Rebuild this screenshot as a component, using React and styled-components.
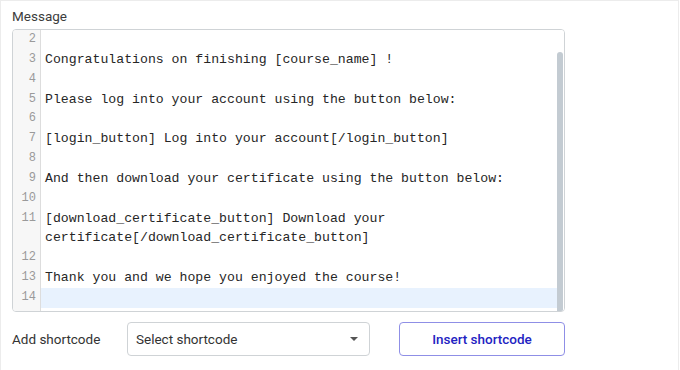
import React from "react";
import styled, { createGlobalStyle } from "styled-components";

const Global = createGlobalStyle`
  html, body { margin: 0; padding: 0; background: #fff; }
  body { font-family: Roboto, "Noto Sans", Arial, sans-serif; }
`;

const Card = styled.div`
  box-sizing: border-box;
  width: 679px;
  height: 370px;
  border: 1px solid #ececec;
  border-bottom: none;
  padding: 7px 0 0 11px;
  background: #fff;
`;

const Label = styled.div`
  font-size: 13.5px;
  line-height: 16px;
  color: #3c3c3c;
  margin-bottom: 5px;
`;

const Editor = styled.div`
  box-sizing: border-box;
  width: 553px;
  height: 283px;
  border: 1px solid #cfd3d6;
  border-radius: 4px;
  display: flex;
  overflow: hidden;
  background: #fff;
`;

const Body = styled.div`
  flex: 1;
  display: grid;
  grid-template-columns: 27px 1fr;
  align-content: start;
  background: linear-gradient(to right, #f7f7f7 0, #f7f7f7 27px, #fff 27px);
  position: relative;
  &::before {
    content: "";
    position: absolute;
    left: 27px;
    top: 0;
    bottom: 0;
    border-left: 1px solid #dddddd;
  }
`;

const Num = styled.div`
  font-family: "Liberation Mono", "DejaVu Sans Mono", monospace;
  font-size: 12px;
  line-height: 19.85px;
  color: #9a9a9a;
  text-align: right;
  padding-right: 4px;
`;

const Code = styled.div`
  font-family: "Liberation Mono", "Courier New", monospace;
  font-size: 13.2px;
  line-height: 19.85px;
  color: #262626;
  white-space: pre-wrap;
  word-break: normal;
  padding-left: 5px;
  padding-right: 4px;
  min-height: 19.85px;
  background: ${(p) => (p.$active ? "#e8f2fe" : "transparent")};
  margin-left: ${(p) => (p.$active ? "1px" : "0")};
`;

const Track = styled.div`
  width: 7px;
  display: flex;
  flex-direction: column;
  padding-top: 22px;
  background: #fff;
`;

const Thumb = styled.div`
  flex: 1;
  width: 6px;
  background: #c3cbd2;
  border-radius: 3px 3px 0 0;
`;

const Row = styled.div`
  display: flex;
  align-items: center;
  gap: 29px;
  margin-top: 10px;
`;

const RowLabel = styled.div`
  width: 86px;
  font-size: 13.5px;
  color: #333;
  white-space: nowrap;
`;

const Select = styled.div`
  box-sizing: border-box;
  width: 243px;
  height: 34px;
  border: 1px solid #cfd3d6;
  border-radius: 4px;
  display: flex;
  align-items: center;
  justify-content: space-between;
  padding: 0 11px 0 8px;
  font-size: 13.5px;
  color: #333;
`;

const Caret = styled.span`
  width: 0;
  height: 0;
  border-left: 4px solid transparent;
  border-right: 4px solid transparent;
  border-top: 4px solid #555;
`;

const Button = styled.button`
  box-sizing: border-box;
  width: 166px;
  height: 34px;
  border: 1px solid #8f8fe6;
  border-radius: 4px;
  background: #fff;
  color: #2323c2;
  font-family: Roboto, "Noto Sans", Arial, sans-serif;
  font-size: 13.5px;
  font-weight: 500;
  cursor: pointer;
`;

const lines = [
  [2, ""],
  [3, "Congratulations on finishing [course_name] !"],
  [4, ""],
  [5, "Please log into your account using the button below:"],
  [6, ""],
  [7, "[login_button] Log into your account[/login_button]"],
  [8, ""],
  [9, "And then download your certificate using the button below:"],
  [10, ""],
  [11, "[download_certificate_button] Download your certificate[/download_certificate_button]"],
  [12, ""],
  [13, "Thank you and we hope you enjoyed the course!"],
  [14, ""],
];

export default function App() {
  return (
    <>
      <Global />
      <Card>
        <Label>Message</Label>
        <Editor>
          <Body>
            {lines.map(([n, t]) => (
              <React.Fragment key={n}>
                <Num>{n}</Num>
                <Code $active={n === 14}>{t}</Code>
              </React.Fragment>
            ))}
          </Body>
          <Track>
            <Thumb />
          </Track>
        </Editor>
        <Row>
          <RowLabel>Add shortcode</RowLabel>
          <Select>
            <span>Select shortcode</span>
            <Caret />
          </Select>
          <Button>Insert shortcode</Button>
        </Row>
      </Card>
    </>
  );
}
